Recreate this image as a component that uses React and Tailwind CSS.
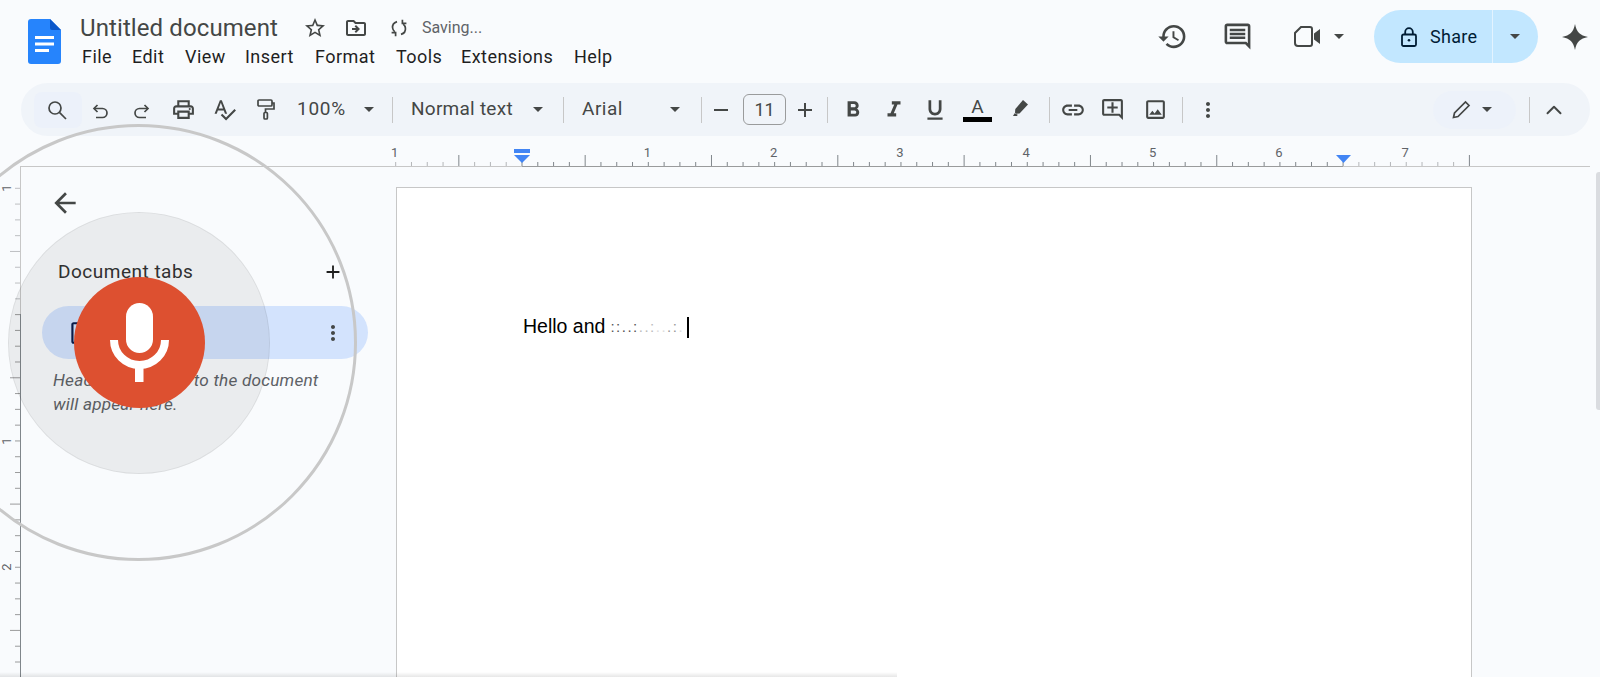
import {
  MdArrowBack,
  MdAdd,
  MdMoreVert,
  MdOutlinePrint,
  MdSpellcheck,
  MdRemove,
  MdFormatBold,
  MdFormatItalic,
  MdFormatUnderlined,
  MdLink,
  MdOutlineAddComment,
  MdOutlineImage,
  MdHistory,
  MdOutlineComment,
  MdStarBorder,
  MdOutlineDriveFileMove,
  MdOutlineDescription,
} from "react-icons/md";
import { ChevronUp } from "lucide-react";

const MENU = [
  ["File", "w-[50px]"],
  ["Edit", "w-[53px]"],
  ["View", "w-[60px]"],
  ["Insert", "w-[70px]"],
  ["Format", "w-[81px]"],
  ["Tools", "w-[65px]"],
  ["Extensions", "w-[113px]"],
  ["Help", "w-[50px]"],
];

const STEP = 15.79;

function Caret({ className = "" }) {
  return (
    <svg viewBox="0 0 10 5" className={`w-[10px] h-[5px] shrink-0 ${className}`}>
      <polygon points="0,0 10,0 5,5" fill="#444746" />
    </svg>
  );
}

function Sep({ className = "" }) {
  return <div className={`w-px h-[26px] bg-[#c7c7c7] shrink-0 ${className}`} />;
}

function DocsLogo() {
  return (
    <svg viewBox="0 0 33 45" className="w-[33px] h-[45px] shrink-0">
      <path d="M3 0H22L33 11V42a3 3 0 0 1-3 3H3a3 3 0 0 1-3-3V3a3 3 0 0 1 3-3z" fill="#2684fc" />
      <path d="M22 0L33 11H24a2 2 0 0 1-2-2z" fill="#0c57c9" />
      <rect x="7" y="17" width="19" height="3" fill="#fff" />
      <rect x="7" y="23.5" width="19" height="3" fill="#fff" />
      <rect x="7" y="30" width="14" height="3" fill="#fff" />
    </svg>
  );
}

function SyncIcon() {
  return (
    <svg viewBox="0 0 20 20" className="w-5 h-5 shrink-0" fill="none" stroke="#444746" strokeWidth="1.7">
      <path d="M8 3.6C5 4.6 3.2 7 3.6 10c.2 1.6 1 2.9 2.2 3.9" />
      <path d="M2.6 14.6h4v3.6" />
      <path d="M12 16.4c3-1 4.8-3.4 4.4-6.4-.2-1.6-1-2.9-2.2-3.9" />
      <path d="M17.4 5.4h-4V1.8" />
    </svg>
  );
}

function Spark() {
  return (
    <svg viewBox="0 0 26 26" className="w-[26px] h-[26px] shrink-0">
      <path d="M13 0C14.5 8 18 11.5 26 13C18 14.5 14.5 18 13 26C11.5 18 8 14.5 0 13C8 11.5 11.5 8 13 0Z" fill="#444746" />
    </svg>
  );
}

function SearchIcon() {
  return (
    <svg viewBox="0 0 20 20" className="w-[20px] h-[20px]" fill="none" stroke="#444746" strokeWidth="1.7">
      <circle cx="8" cy="8" r="6" />
      <path d="M12.4 12.4L19 19" />
    </svg>
  );
}

function UndoIcon({ flip }) {
  return (
    <svg viewBox="0 0 16 15" className={`w-[16px] h-[15px] ${flip ? "-scale-x-100" : ""}`} fill="none" stroke="#444746" strokeWidth="1.7">
      <path d="M5.5 1L2 4.5L5.5 8" />
      <path d="M2 4.5H10.5a4.2 4.2 0 0 1 0 9H4" />
    </svg>
  );
}

function RollerIcon() {
  return (
    <svg viewBox="0 0 18 21" className="w-[18px] h-[21px]" fill="none" stroke="#444746" strokeWidth="1.7">
      <rect x="1" y="1" width="14" height="6" rx="1" />
      <path d="M15 4h2v6H8.5v3.5" />
      <rect x="7" y="13.5" width="3.4" height="6.5" rx="1" />
    </svg>
  );
}

function VideoIcon() {
  return (
    <svg viewBox="0 0 26 21" className="ml-[41px] w-[26px] h-[21px] shrink-0">
      <path d="M7 1H16a2 2 0 0 1 2 2V18a2 2 0 0 1-2 2H4a3 3 0 0 1-3-3V7z" fill="none" stroke="#444746" strokeWidth="2" />
      <path d="M20 7.5L26 3V18L20 13.5z" fill="#444746" />
    </svg>
  );
}

function LockIcon() {
  return (
    <svg viewBox="0 0 16 20" className="w-[16px] h-[20px] shrink-0" fill="none" stroke="#001d35" strokeWidth="1.8">
      <rect x="1" y="7.5" width="14" height="11.5" rx="1.5" />
      <path d="M4.2 7.5V5a3.8 3.8 0 0 1 7.6 0v2.5" />
      <circle cx="8" cy="13.2" r="1.3" fill="#001d35" stroke="none" />
    </svg>
  );
}

function PenIcon() {
  return (
    <svg viewBox="0 0 19 19" className="w-[19px] h-[19px] shrink-0" fill="none" stroke="#444746" strokeWidth="1.7">
      <path d="M1.5 17.5L2.5 13L13.5 2L17 5.5L6 16.5Z" />
    </svg>
  );
}

function Header() {
  return (
    <header className="h-[83px] flex shrink-0 pl-[28px] pt-[19px]">
      <DocsLogo />
      <div className="ml-[19px] flex flex-col">
        <div className="flex items-center h-[24px] mt-[-3px]">
          <span className="text-[24px] leading-none w-[223px] text-[#444746] tracking-[0.1px] whitespace-nowrap">Untitled document</span>
          <MdStarBorder size={24} color="#444746" className="shrink-0" />
          <MdOutlineDriveFileMove size={24} color="#444746" className="ml-[17px] shrink-0" />
          <div className="ml-[21px]"><SyncIcon /></div>
          <span className="ml-[13px] text-[16px] text-[#5f6368] whitespace-nowrap">Saving...</span>
        </div>
        <nav className="flex mt-[5px] pl-[2px] text-[18px] leading-[24px] text-[#1f1f1f]">
          {MENU.map(([label, w]) => (
            <span key={label} className={`${w} tracking-[0.45px]`}>{label}</span>
          ))}
        </nav>
      </div>
      <div className="ml-auto flex items-start pr-[12px] mt-[-9px]">
        <div className="flex items-center h-[53px]">
          <MdHistory size={31} color="#444746" />
          <MdOutlineComment size={31} color="#444746" className="ml-[34px]" />
          <VideoIcon />
          <Caret className="ml-[14px]" />
        </div>
        <div className="ml-[30px] w-[164px] h-[53px] rounded-full bg-[#c2e7ff] flex items-center">
          <div className="w-[119px] h-full flex items-center pl-[27px] border-r border-[#e3f3ff]">
            <LockIcon />
            <span className="ml-[13px] text-[18px] text-[#001d35] tracking-[0.3px]">Share</span>
          </div>
          <Caret className="ml-[17px]" />
        </div>
        <div className="ml-[24px] h-[53px] flex items-center"><Spark /></div>
      </div>
    </header>
  );
}

function Toolbar() {
  return (
    <div className="h-[53px] mx-[21px] w-[1569px] shrink-0 rounded-full bg-[#f0f4f9] flex items-center pl-[13px] pr-[23px] text-[#444746]">
      <div className="w-[48px] h-[36px] rounded-[8px] bg-[#ecf1fa] flex items-center justify-center shrink-0 pr-[3px]">
        <SearchIcon />
      </div>
      <div className="flex gap-[5.5px] items-center shrink-0">
        <div className="w-[36px] flex justify-center pt-[3px]"><UndoIcon /></div>
        <div className="w-[36px] flex justify-center pt-[3px]"><UndoIcon flip /></div>
        <div className="w-[36px] flex justify-center"><MdOutlinePrint size={25} /></div>
        <div className="w-[36px] flex justify-center"><MdSpellcheck size={25} /></div>
        <div className="w-[36px] flex justify-center"><RollerIcon /></div>
      </div>
      <span className="ml-[13px] w-[49px] text-[19px] tracking-[0.7px] shrink-0">100%</span>
      <Caret className="ml-[18px]" />
      <Sep className="ml-[18px]" />
      <span className="ml-[18px] w-[101px] text-[19px] tracking-[0.25px] whitespace-nowrap shrink-0">Normal text</span>
      <Caret className="ml-[21px]" />
      <Sep className="ml-[20px]" />
      <span className="ml-[18px] w-[40px] text-[19px] tracking-[0.5px] shrink-0">Arial</span>
      <Caret className="ml-[48px]" />
      <Sep className="ml-[21px]" />
      <MdRemove size={24} className="ml-[7px] shrink-0" />
      <div className="ml-[10px] w-[43px] h-[31px] rounded-[6px] border border-[#9a9b9c] flex items-center justify-center text-[18px] shrink-0">11</div>
      <MdAdd size={24} className="ml-[7px] shrink-0" />
      <Sep className="ml-[10px]" />
      <MdFormatBold size={26} className="ml-[12px] shrink-0" />
      <MdFormatItalic size={26} className="ml-[15px] shrink-0" />
      <MdFormatUnderlined size={26} className="ml-[15px] shrink-0" />
      <div className="ml-[15px] w-[29px] flex flex-col items-center shrink-0">
        <span className="text-[19px] leading-[20px]">A</span>
        <div className="w-[29px] h-[5px] bg-black" />
      </div>
      <svg viewBox="0 0 20 20" className="ml-[18px] w-[20px] h-[20px] mb-[4px] shrink-0">
        <path d="M13 2l5 4.5-8.5 9-3.5.3-1-1 .3-3.7z" fill="#444746" />
        <path d="M4.6 15.2L3 18h4l.8-1.2z" fill="#444746" />
      </svg>
      <Sep className="ml-[19px]" />
      <MdLink size={26} className="ml-[10px] shrink-0" />
      <MdOutlineAddComment size={25} className="ml-[14px] shrink-0" />
      <MdOutlineImage size={25} className="ml-[18px] shrink-0" />
      <Sep className="ml-[14px]" />
      <MdMoreVert size={24} className="ml-[13px] shrink-0" />
      <div className="ml-auto w-[83px] h-[38px] rounded-full bg-[#edf2fa] flex items-center pl-[19px] shrink-0">
        <PenIcon />
        <Caret className="ml-[11px]" />
      </div>
      <Sep className="ml-[13px]" />
      <ChevronUp size={26} strokeWidth={1.8} className="ml-[11px] shrink-0" />
    </div>
  );
}

function TopRuler() {
  const ticks = [];
  for (let k = -8; k <= 60; k++) {
    ticks.push(k);
  }
  return (
    <svg viewBox="0 136 1600 31" className="w-[1600px] h-[31px] shrink-0 block">
      <line x1="20" y1="166.5" x2="1590" y2="166.5" stroke="#c7c7c7" />
      <line x1="522" y1="166.5" x2="1343" y2="166.5" stroke="#9a9b9c" />
      {ticks.map((k) => {
        const x = 522 + k * STEP;
        const half = ((k % 8) + 8) % 8 === 4;
        const inRange = k >= 0 && k <= 52;
        return (
          <line
            key={k}
            x1={x}
            x2={x}
            y1={half ? 155 : 162}
            y2="166"
            stroke={inRange || half ? "#80868b" : "#b4b6b9"}
          />
        );
      })}
      {[[-8, "1"], [8, "1"], [16, "2"], [24, "3"], [32, "4"], [40, "5"], [48, "6"], [56, "7"]].map(([k, label]) => (
        <text key={k} x={521 + k * STEP} y="157" fontSize="13" textAnchor="middle" fill="#5f6368" fontFamily="Roboto, sans-serif">
          {label}
        </text>
      ))}
      <rect x="514" y="149" width="16" height="4" fill="#4285f4" />
      <polygon points="514,155 530,155 522,163" fill="#4285f4" />
      <polygon points="1336,155 1351,155 1343.5,163" fill="#4285f4" />
    </svg>
  );
}

function LeftRuler() {
  const rows = [];
  for (let n = 0; n <= 31; n++) {
    rows.push(n);
  }
  return (
    <svg viewBox="0 167 21 510" className="w-[21px] h-[510px] shrink-0 block">
      <line x1="20.5" y1="167" x2="20.5" y2="314" stroke="#c7c7c7" />
      <line x1="20.5" y1="314" x2="20.5" y2="677" stroke="#80868b" />
      {rows.map((n) => {
        const y = 188.3 + n * STEP;
        const long = n % 8 === 4;
        return <line key={n} x1={long ? 10 : 15} x2="20" y1={y} y2={y} stroke={n < 8 ? "#bdbfc2" : "#9a9b9c"} />;
      })}
      {[[188, "1"], [441, "1"], [567, "2"]].map(([y, label]) => (
        <text
          key={y}
          x="0"
          y="0"
          fontSize="13"
          textAnchor="middle"
          fill="#5f6368"
          fontFamily="Roboto, sans-serif"
          transform={`translate(11 ${y}) rotate(-90)`}
        >
          {label}
        </text>
      ))}
    </svg>
  );
}

function Sidebar() {
  return (
    <aside className="w-[375px] shrink-0 pl-[21px] pt-[20px]">
      <div className="pl-[7px]">
        <MdArrowBack size={32} color="#444746" />
      </div>
      <div className="mt-[40px] flex items-center justify-between pl-[16px] pr-[52px] h-[26px]">
        <span className="text-[19px] tracking-[0.5px] text-[#333]">Document tabs</span>
        <MdAdd size={22} color="#1f1f1f" />
      </div>
      <div className="mt-[21px] w-[326px] h-[53px] rounded-full bg-[#d3e3fd] flex items-center pl-[27px] pr-[24px]">
        <MdOutlineDescription size={26} color="#0b1d4d" className="ml-[-2px]" />
        <span className="ml-[10px] text-[16px] text-[#0b1d4d]">Tab 1</span>
        <MdMoreVert size={24} color="#444746" className="ml-auto mr-[-1px]" />
      </div>
      <p className="mt-[9px] pl-[11px] w-[290px] text-[17.2px] leading-[24px] italic text-[#5f6368] tracking-[0.2px]">
        Headings you add to the document will appear here.
      </p>
    </aside>
  );
}

function Page() {
  return (
    <main className="mt-[20px] w-[1076px] h-[490px] shrink-0 bg-white border-l border-r border-t border-[#c7c7c7] pl-[126px] pt-[124px]">
      <div className="flex items-center h-[30px] font-['Liberation_Sans',Arial,sans-serif] text-[19.5px] text-black">
        <span>Hello and</span>
        <span className="ml-[5px] tracking-[1.5px] text-[15px] whitespace-nowrap">
          <span className="text-[#555]">::..:</span>
          <span className="text-[#bbb]">..:</span>
          <span className="text-[#ddd]">..</span>
          <span className="text-[#999]">.:</span>
          <span className="text-[#ddd]">.</span>
        </span>
        <span className="ml-[3px] w-[2px] h-[21px] bg-black" />
      </div>
    </main>
  );
}

function MicOverlay() {
  return (
    <div className="absolute left-[-80px] top-[124px] w-[437px] h-[437px] rounded-full border-[3px] border-[#c8c8c8] flex items-center justify-center">
      <div className="w-[262px] h-[262px] rounded-full bg-[#0000000f] border border-[#00000010] flex items-center justify-center">
        <div className="w-[131px] h-[131px] rounded-full bg-[#dd5030] translate-x-[1px]">
          <svg viewBox="0 0 131 131" className="w-[131px] h-[131px]">
            <rect x="52" y="26" width="27" height="50" rx="13.5" fill="#fff" />
            <path d="M40 63a25.5 25 0 0 0 51 0" fill="none" stroke="#fff" strokeWidth="8" />
            <rect x="61" y="88" width="8.5" height="17" fill="#fff" />
          </svg>
        </div>
      </div>
    </div>
  );
}

export default function App() {
  return (
    <div className="relative w-[1600px] h-[677px] overflow-hidden bg-[#f9fbfd] font-['Roboto',sans-serif] flex flex-col">
      <Header />
      <Toolbar />
      <TopRuler />
      <div className="flex">
        <LeftRuler />
        <Sidebar />
        <Page />
      </div>
      <MicOverlay />
      <div className="absolute right-0 top-[172px] w-[4px] h-[238px] rounded-l-[3px] bg-[#dadce0]" />
      <div className="absolute left-0 bottom-0 w-[897px] h-[5px] bg-gradient-to-t from-[#00000018] to-transparent" />
    </div>
  );
}
